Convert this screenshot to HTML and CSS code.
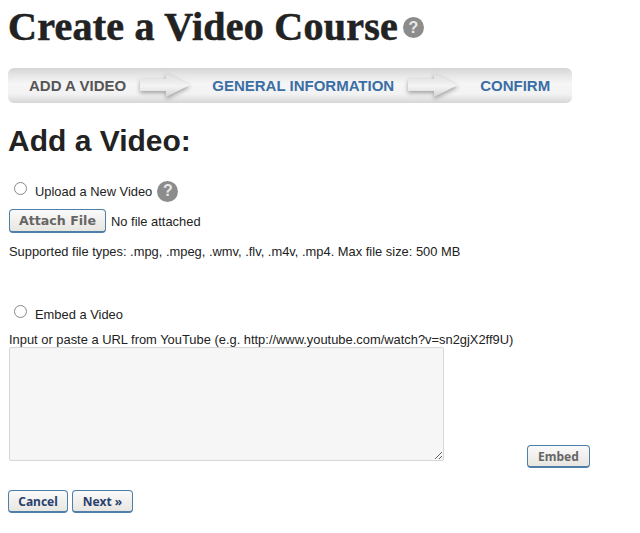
FILE: index.html
```html
<!DOCTYPE html>
<html lang="en">

<head>
    <meta charset="UTF-8">
    <meta name="viewport" content="width=device-width, initial-scale=1.0">
    <title>Create a Video Course</title>
    <link rel="stylesheet" href="styles.css">
</head>

<body>
    <div class="title-row">
        <h1>Create a Video Course</h1>
        <span class="help help-title">?</span>
    </div>

    <div class="steps">
        <span class="step step-current">ADD A VIDEO</span>
        <svg class="step-arrow" width="52" height="28" viewBox="0 0 52 28">
            <defs>
                <linearGradient id="arrowFill" x1="0" y1="0" x2="0" y2="1">
                    <stop offset="0" stop-color="#dcdcdc"></stop>
                    <stop offset="0.55" stop-color="#f4f4f4"></stop>
                    <stop offset="1" stop-color="#d4d4d4"></stop>
                </linearGradient>
            </defs>
            <path d="M1 7h26V1l24 12-24 12v-6H1z" fill="url(#arrowFill)"></path>
        </svg>
        <span class="step step-general">GENERAL INFORMATION</span>
        <svg class="step-arrow" width="52" height="28" viewBox="0 0 52 28">
            <path d="M1 7h26V1l24 12-24 12v-6H1z" fill="url(#arrowFill)"></path>
        </svg>
        <span class="step step-confirm">CONFIRM</span>
    </div>

    <h2>Add a Video:</h2>

    <div class="option option-upload">
        <span class="radio"></span>
        <label>Upload a New Video</label>
        <span class="help">?</span>
    </div>
    <div class="attach-row">
        <button class="btn btn-attach">Attach File</button>
        <span>No file attached</span>
    </div>
    <p class="file-note">Supported file types: .mpg, .mpeg, .wmv, .flv, .m4v, .mp4. Max file size: 500 MB</p>

    <div class="option option-embed">
        <span class="radio"></span>
        <label>Embed a Video</label>
    </div>
    <p class="url-note">Input or paste a URL from YouTube (e.g. http://www.youtube.com/watch?v=sn2gjX2ff9U)</p>
    <div class="embed-row">
        <textarea class="url-input"></textarea>
        <button class="btn btn-embed">Embed</button>
    </div>

    <div class="actions">
        <button class="btn btn-action btn-cancel">Cancel</button>
        <button class="btn btn-action btn-next">Next »</button>
    </div>
</body>

</html>
```

FILE: styles.css
```css
* {
    margin: 0;
    padding: 0;
    box-sizing: border-box;
}

body {
    background-color: white;
    color: #222;
    font-family: "Liberation Sans", Arial, sans-serif;
    font-size: 12.9px;
    padding: 8px 8px 0;
}

.title-row {
    display: flex;
    align-items: center;
    gap: 5px;
    height: 38px;
}

h1 {
    font-family: "Liberation Serif", "Times New Roman", serif;
    font-size: 40px;
    font-weight: bold;
    line-height: 38px;
    letter-spacing: 0.25px;
    color: #222;
    -webkit-text-stroke: 0.6px #222;
}

.help {
    display: flex;
    align-items: center;
    justify-content: center;
    width: 21px;
    height: 21px;
    border-radius: 50%;
    background-color: #8c8c8c;
    color: #e8e8e8;
    font-size: 16px;
    font-weight: bold;
}

.help-title {
    margin-top: 1px;
}

.steps {
    display: flex;
    align-items: center;
    width: 564px;
    height: 35px;
    margin-top: 22px;
    border-radius: 6px;
    background: linear-gradient(#d4d4d4 0%, #e6e6e6 20%, #f6f6f6 45%, #f2f2f2 75%, #d6d6d6 100%);
    font-size: 15px;
    font-weight: bold;
    color: #3a6ea5;
}

.step-current {
    color: #555;
    margin-left: 21px;
}

.step-arrow {
    flex-shrink: 0;
    margin-left: 13px;
    filter: drop-shadow(0 2px 2px rgba(0, 0, 0, 0.35));
}

.step-general,
.step-confirm {
    margin-left: 21px;
}

h2 {
    font-size: 30px;
    line-height: 34px;
    font-weight: bold;
    color: #222;
    margin-top: 21px;
}

.option {
    display: flex;
    align-items: center;
}

.option-upload {
    height: 24px;
    margin-top: 21px;
}

.option-upload .help {
    margin-left: 5px;
}

.radio {
    width: 13px;
    height: 13px;
    margin: -6px 8px 0 6px;
    border: 1px solid #888;
    border-radius: 50%;
    background-color: white;
}

.attach-row {
    display: flex;
    align-items: center;
    gap: 5px;
    margin: 6px 0 0 1px;
}

.btn {
    font-family: "Noto Sans", Verdana, sans-serif;
    font-size: 12px;
    font-weight: bold;
    height: 23px;
    border: 1px solid #4f7fa8;
    border-bottom-width: 2px;
    border-radius: 4px;
    background: linear-gradient(#fafafa, #e8e6e0);
    color: #666;
}

.btn-attach {
    font-family: "DejaVu Sans", Verdana, sans-serif;
    font-size: 12.6px;
    width: 97px;
    height: 24px;
}

.file-note {
    margin: 11px 0 0 1px;
    line-height: 15px;
}

.option-embed {
    height: 16px;
    margin-top: 47px;
}

.url-note {
    margin: 11px 0 0 1px;
    line-height: 14px;
}

.embed-row {
    display: flex;
    align-items: flex-end;
    margin-left: 1px;
}

.url-input {
    width: 435px;
    height: 114px;
    border: 1px solid #d8d8d8;
    border-radius: 2px;
    background-color: #f6f6f6;
}

.btn-embed {
    width: 63px;
    margin: 0 0 -7px 83px;
}

.actions {
    display: flex;
    gap: 4px;
    margin-top: 29px;
}

.btn-action {
    color: #2a3f6f;
}

.btn-cancel {
    width: 60px;
}

.btn-next {
    width: 61px;
}
```
